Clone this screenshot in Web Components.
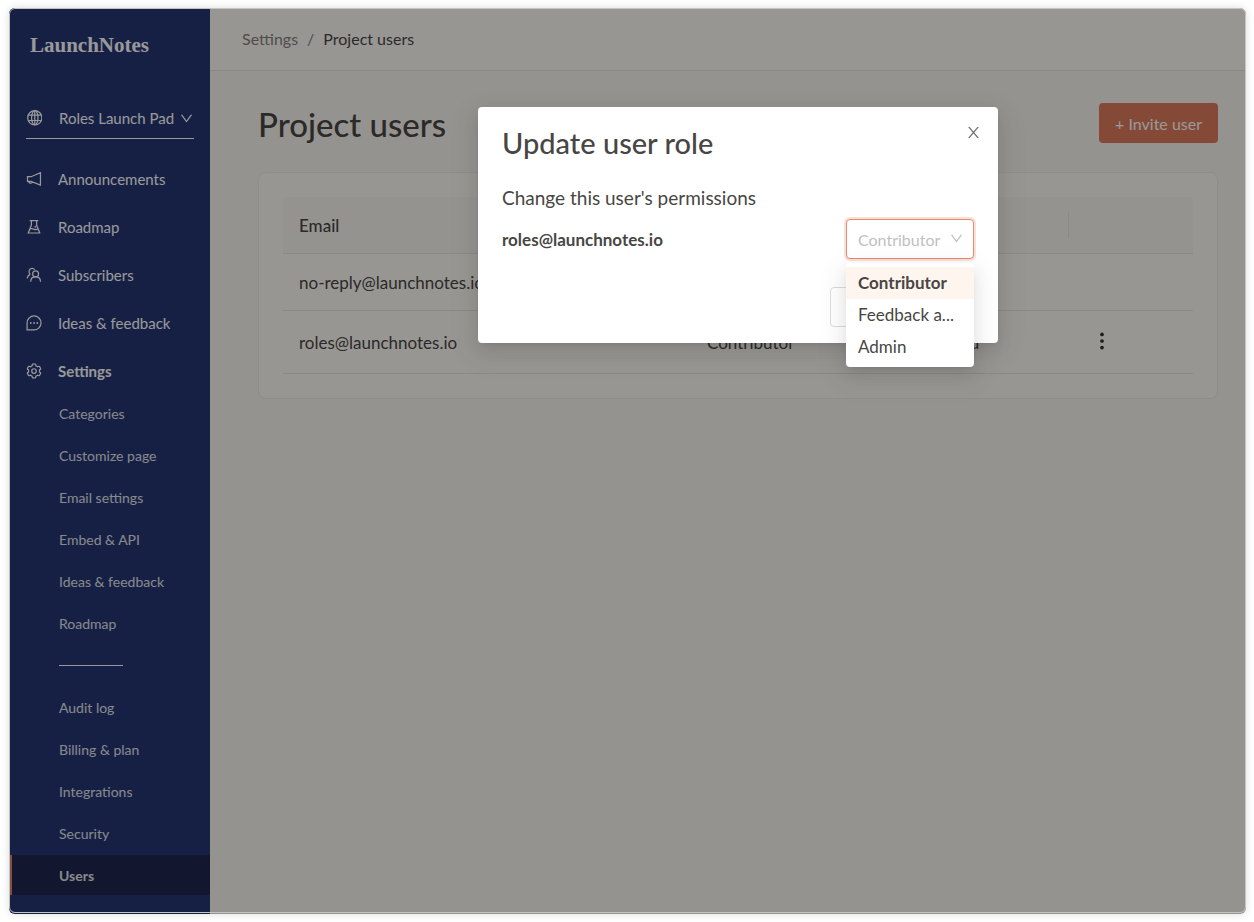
<!DOCTYPE html>
<html lang="en">
<head>
<meta charset="utf-8">
<meta name="viewport" content="width=device-width, initial-scale=1">
<title>Project users - LaunchNotes</title>
<style>
  body { margin: 0; background: #fff; font-family: Lato, "Open Sans", sans-serif; font-size: 16px; color: #484644; }
</style>
</head>
<body>
<app-frame>
  <side-nav slot="nav"></side-nav>
  <crumb-bar></crumb-bar>
  <users-page></users-page>
  <role-dialog slot="dialog"></role-dialog>
</app-frame>

<script>
const define = (name, markup) => {
  const template = document.createElement('template');
  template.innerHTML = markup;
  customElements.define(name, class extends HTMLElement {
    constructor() {
      super();
      this.attachShadow({ mode: 'open' }).append(template.content.cloneNode(true));
    }
  });
};

const ICONS = {
  down: '<path fill="currentColor" d="M884 256h-75c-5.1 0-9.9 2.5-12.9 6.6L512 654.2 227.9 262.6c-3-4.1-7.8-6.6-12.9-6.6h-75c-6.5 0-10.3 7.4-6.5 12.7l352.6 486.1c12.8 17.6 39 17.6 51.7 0l352.6-486.1c3.9-5.3.1-12.7-6.4-12.7z"/>',
  close: '<path fill="currentColor" d="M563.8 512l262.5-312.9c4.4-5.2.7-13.1-6.1-13.1h-79.8c-4.7 0-9.2 2.1-12.3 5.7L511.6 449.8 295.1 191.7c-3-3.6-7.5-5.7-12.3-5.7H203c-6.8 0-10.5 7.9-6.1 13.1L459.4 512 196.9 824.9A7.95 7.95 0 00203 838h79.8c4.7 0 9.2-2.1 12.3-5.7l216.5-258.1 216.5 258.1c3 3.6 7.5 5.7 12.3 5.7h79.8c6.8 0 10.5-7.9 6.1-13.1L563.8 512z"/>',
  globe: '<circle cx="562" cy="500" r="455"/><ellipse cx="562" cy="500" rx="205" ry="455"/><path d="M562 45v910M168 328h788M168 672h788"/>',
  horn: '<path d="M95 365h230L925 110v795L325 660H95zM175 665a120 120 0 00235 30"/>',
  flask: '<path d="M235 100h554M345 100v290L145 895h735L680 390V100M250 640c190-110 300 130 510 0"/><circle cx="600" cy="500" r="22" fill="currentColor"/>',
  team: '<circle cx="615" cy="440" r="190"/><path d="M300 945c0-200 130-310 315-310s315 110 315 310M85 735c5-130 80-220 190-260M270 470c-130-130-90-370 110-385 75-5 140 30 180 85"/>',
  chat: '<path d="M70 950V505a445 445 0 11445 445z"/><g fill="currentColor" stroke="none"><circle cx="305" cy="512" r="58"/><circle cx="515" cy="512" r="58"/><circle cx="725" cy="512" r="58"/></g>',
  gear: '<circle cx="512" cy="512" r="145"/><path d="M924.8 625.7l-65.5-56c3.1-19 4.7-38.4 4.7-57.8s-1.6-38.8-4.7-57.8l65.5-56a32.03 32.03 0 009.3-35.2l-.9-2.6a443.74 443.74 0 00-79.7-137.9l-1.8-2.1a32.12 32.12 0 00-35.1-9.5l-81.3 28.9c-30-24.6-63.5-44-99.7-57.6l-15.7-85a32.05 32.05 0 00-25.8-25.7l-2.7-.5c-52.1-9.4-106.9-9.4-159 0l-2.7.5a32.05 32.05 0 00-25.8 25.7l-15.8 85.4a351.86 351.86 0 00-99 57.4l-81.9-29.1a32 32 0 00-35.1 9.5l-1.8 2.1a446.02 446.02 0 00-79.7 137.9l-.9 2.6c-4.5 12.5-.8 26.5 9.3 35.2l66.3 56.6c-3.1 18.8-4.6 38-4.6 57.1 0 19.2 1.5 38.4 4.6 57.1L99 625.5a32.03 32.03 0 00-9.3 35.2l.9 2.6c18.1 50.4 44.9 96.9 79.7 137.9l1.8 2.1a32.12 32.12 0 0035.1 9.5l81.9-29.1c29.8 24.5 63.1 43.9 99 57.4l15.8 85.4a32.05 32.05 0 0025.8 25.7l2.7.5a449.4 449.4 0 00159 0l2.7-.5a32.05 32.05 0 0025.8-25.7l15.7-85a350 350 0 0099.7-57.6l81.3 28.9a32 32 0 0035.1-9.5l1.8-2.1c34.8-41.1 61.6-87.5 79.7-137.9l.9-2.6c4.5-12.3.8-26.3-9.3-35z"/>',
  more: '<g fill="currentColor" stroke="none"><circle cx="512" cy="140" r="105"/><circle cx="512" cy="512" r="105"/><circle cx="512" cy="884" r="105"/></g>'
};

customElements.define('ui-icon', class extends HTMLElement {
  constructor() {
    super();
    const name = this.getAttribute('name');
    const stroke = name === 'down' || name === 'close' ? 'none' : 'currentColor';
    this.attachShadow({ mode: 'open' }).innerHTML = `
      <style>
        :host { display: block; flex: none; width: 16px; height: 16px; }
        svg { display: block; width: 100%; height: 100%; }
      </style>
      <svg viewBox="0 0 1024 1024" fill="none" stroke="${stroke}" stroke-width="78" aria-hidden="true">${ICONS[name]}</svg>`;
  }
});

define('nav-item', `
  <style>
    :host { display: block; }
    a { display: flex; align-items: center; gap: 16px; height: 40px; padding: 0 16px; color: #fff; font-size: 15px; text-decoration: none; }
    :host([sub]) a { padding-left: 49px; font-size: 14px; color: #e2e4ea; }
    :host([strong]) a { font-weight: 700; }
    :host([current]) a { background: #1e264f; box-shadow: inset 2px 0 #e0816a; font-weight: 700; }
  </style>
  <a href="#"><slot name="icon"></slot><slot></slot></a>
`);

define('side-nav', `
  <style>
    :host { display: block; width: 200px; flex: none; background: #263674; color: #fff; }
    .brand { display: block; margin: 22px 20px 39px; color: #fff; font: 700 21px/28px "Liberation Serif", serif; text-decoration: none; }
    .project { display: flex; align-items: center; box-sizing: border-box; width: calc(100% - 32px); height: 41px; margin: 0 16px 20px; padding: 0; border: 0; border-bottom: 1px solid #fff; background: none; color: inherit; font: inherit; font-size: 15px; }
    .project span { flex: 1; margin-left: 17px; text-align: left; white-space: nowrap; }
    .project ui-icon:last-child { width: 15px; height: 15px; }
    nav { display: grid; gap: 8px; }
    .sub { display: grid; gap: 2px; margin-top: 2px; }
    .rule { display: flex; align-items: center; height: 40px; padding-left: 49px; }
    hr { width: 64px; height: 1px; margin: 0; border: 0; background: #fff; }
  </style>
  <a class="brand" href="#">LaunchNotes</a>
  <button class="project" type="button"><ui-icon name="globe"></ui-icon><span>Roles Launch Pad</span><ui-icon name="down"></ui-icon></button>
  <nav aria-label="Main">
    <nav-item><ui-icon slot="icon" name="horn"></ui-icon>Announcements</nav-item>
    <nav-item><ui-icon slot="icon" name="flask"></ui-icon>Roadmap</nav-item>
    <nav-item><ui-icon slot="icon" name="team"></ui-icon>Subscribers</nav-item>
    <nav-item><ui-icon slot="icon" name="chat"></ui-icon>Ideas &amp; feedback</nav-item>
    <nav-item strong><ui-icon slot="icon" name="gear"></ui-icon>Settings</nav-item>
  </nav>
  <nav class="sub" aria-label="Settings">
    <nav-item sub>Categories</nav-item>
    <nav-item sub>Customize page</nav-item>
    <nav-item sub>Email settings</nav-item>
    <nav-item sub>Embed &amp; API</nav-item>
    <nav-item sub>Ideas &amp; feedback</nav-item>
    <nav-item sub>Roadmap</nav-item>
    <div class="rule"><hr></div>
    <nav-item sub>Audit log</nav-item>
    <nav-item sub>Billing &amp; plan</nav-item>
    <nav-item sub>Integrations</nav-item>
    <nav-item sub>Security</nav-item>
    <nav-item sub current>Users</nav-item>
  </nav>
`);

define('crumb-bar', `
  <style>
    :host { display: flex; align-items: center; gap: 9px; box-sizing: border-box; height: 62px; padding: 0 32px 2px; border-bottom: 1px solid #e7e4df; background: #fefbf6; }
    a, i { color: #84817d; font-style: normal; text-decoration: none; }
  </style>
  <a href="#">Settings</a><i>/</i><span>Project users</span>
`);

define('users-page', `
  <style>
    :host { display: block; padding: 32px 27px 32px 48px; }
    header { display: flex; align-items: center; justify-content: space-between; margin-bottom: 29px; }
    h1 { margin: 0; padding-top: 3px; font-size: 33px; line-height: 37px; font-weight: 500; }
    header button { height: 40px; padding: 0 16px; border: 0; border-radius: 4px; background: #de7a5c; color: #fff; font: inherit; }
    section { padding: 24px; border: 1px solid #eeebe6; border-radius: 8px; background: #fefbf6; }
    table { width: 100%; table-layout: fixed; border-collapse: separate; border-spacing: 0; font-size: 17px; }
    th, td { box-sizing: border-box; height: 57px; padding: 0 16px; border-bottom: 1px solid #e7e4df; text-align: left; font-weight: 400; white-space: nowrap; }
    th { position: relative; background: #f8f5f0; font-weight: 500; }
    th:first-child { border-top-left-radius: 4px; }
    th:nth-child(2) { width: 202px; }
    th:nth-child(3) { width: 176px; }
    th:last-child { border-top-right-radius: 4px; width: 124px; }
    th:not(:last-child)::after { content: ""; position: absolute; right: 0; top: 15px; bottom: 15px; width: 1px; background: #e7e4df; }
    tr:last-child td { height: 63px; }
    td button { display: block; width: 34px; padding: 0 0 3px; border: 0; background: none; color: #33312f; }
    td ui-icon { width: 18px; height: 18px; margin: auto; }
  </style>
  <header><h1>Project users</h1><button type="button">+ Invite user</button></header>
  <section>
    <table>
      <thead><tr><th>Email</th><th>Role</th><th>Status</th><th aria-label="Actions"></th></tr></thead>
      <tbody>
        <tr><td>no-reply@launchnotes.io</td><td>Admin</td><td></td><td></td></tr>
        <tr><td>roles@launchnotes.io</td><td>Contributor</td><td>Accepted</td><td><button type="button" aria-label="More actions"><ui-icon name="more"></ui-icon></button></td></tr>
      </tbody>
    </table>
  </section>
`);

define('role-select', `
  <style>
    :host { display: block; position: relative; width: 128px; }
    select { display: block; box-sizing: border-box; width: 100%; height: 40px; padding: 0 11px; border: 1px solid #e58b6c; border-radius: 4px; outline: 0; box-shadow: 0 0 0 2px #f9e0d8; appearance: none; background: #fff; color: #bfbfbf; font: inherit; opacity: 1; }
    ui-icon { position: absolute; right: 10px; top: 12px; width: 15px; height: 15px; color: #bfbfbf; }
    ul { position: absolute; z-index: 1; top: 44px; left: 0; right: 0; margin: 0; padding: 4px 0; border-radius: 4px; background: #fff; list-style: none; font-size: 17px; box-shadow: 0 3px 6px -4px rgba(0,0,0,.12), 0 6px 16px rgba(0,0,0,.08), 0 9px 28px 8px rgba(0,0,0,.05); }
    li { padding: 0 12px; line-height: 32px; overflow: hidden; white-space: nowrap; text-overflow: ellipsis; }
    li[aria-selected=true] { background: #fff5ef; font-weight: 700; }
  </style>
  <select aria-label="Role"><option>Contributor</option><option>Feedback admin</option><option>Admin</option></select>
  <ui-icon name="down"></ui-icon>
  <ul role="listbox" aria-label="Role">
    <li role="option" aria-selected="true">Contributor</li>
    <li role="option">Feedback a...</li>
    <li role="option">Admin</li>
  </ul>
`);

define('role-dialog', `
  <style>
    :host { position: absolute; inset: 0; box-sizing: border-box; display: flex; justify-content: center; align-items: flex-start; padding: 99px 0 0 221px; background: rgba(0,0,0,.4); }
    [role=dialog] { position: relative; box-sizing: border-box; width: 520px; padding: 15px 24px 16px; border-radius: 4px; background: #fff; box-shadow: 0 3px 6px -4px rgba(0,0,0,.12), 0 6px 16px rgba(0,0,0,.08), 0 9px 28px 8px rgba(0,0,0,.05); }
    h2 { margin: 0 0 20px; font-size: 29px; line-height: 42px; font-weight: 500; }
    p { margin: 0 0 7px; font-size: 19px; line-height: 28px; }
    .row { display: flex; align-items: center; justify-content: space-between; }
    b { font-size: 17px; }
    footer { display: flex; justify-content: flex-end; gap: 8px; margin-top: 28px; }
    footer button { height: 40px; border: 1px solid #dedcda; border-radius: 4px; background: #fff; }
    .cancel { width: 74px; }
    .save { width: 62px; }
    .close { position: absolute; top: 17px; right: 16px; padding: 0; border: 0; background: none; color: #77736f; }
    .close ui-icon { width: 17px; height: 17px; }
  </style>
  <div role="dialog" aria-labelledby="title">
    <h2 id="title">Update user role</h2>
    <button class="close" type="button" aria-label="Close"><ui-icon name="close"></ui-icon></button>
    <p>Change this user's permissions</p>
    <div class="row"><b>roles@launchnotes.io</b><role-select></role-select></div>
    <footer><button class="cancel" type="button" aria-label="Cancel"></button><button class="save" type="button" aria-label="Save"></button></footer>
  </div>
`);

define('app-frame', `
  <style>
    :host { display: block; box-sizing: border-box; min-height: 100vh; padding: 8px 8px 8px 9px; }
    .window { position: relative; display: flex; box-sizing: border-box; min-height: calc(100vh - 16px); padding: 1px; overflow: hidden; border-radius: 6px; background: linear-gradient(90deg, #263674 201px, #f8f5f0 201px); }
    .window::after { content: ""; position: absolute; inset: 0 0 1px; border: 1px solid #c6c4c1; border-radius: 6px; pointer-events: none; }
    .shadow { border-radius: 6px; box-shadow: 0 0 8px rgba(0,0,0,.14); }
    main { flex: 1; min-width: 0; }
  </style>
  <div class="shadow"><div class="window">
    <slot name="nav"></slot>
    <main><slot></slot></main>
    <slot name="dialog"></slot>
  </div></div>
`);
</script>
</body>
</html>
